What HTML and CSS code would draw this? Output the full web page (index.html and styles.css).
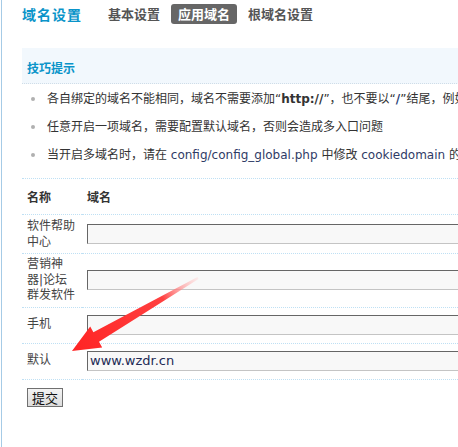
FILE: index.html
```html
<!DOCTYPE html>
<html>
<head>
<meta charset="utf-8">
<link rel="stylesheet" href="styles.css">
</head>
<body>
<div class="frame">
  <div class="topbar">
    <h3 class="title">域名设置</h3>
    <ul class="tabs">
      <li class="tab">基本设置</li>
      <li class="tab current">应用域名</li>
      <li class="tab">根域名设置</li>
    </ul>
  </div>
  <div class="tips-head">技巧提示</div>
  <ul class="tiplist">
    <li><span class="tiptext">各自绑定的域名不能相同，域名不需要添加“<b>http://</b>”，也不要以“<b class="slash">/</b>”结尾，例如：portal.comsenz.com</span></li>
    <li><span class="tiptext">任意开启一项域名，需要配置默认域名，否则会造成多入口问题</span></li>
    <li><span class="tiptext">当开启多域名时，请在 <span class="latin">config/config_global.php</span> 中修改 <span class="latin">cookiedomain</span> 的值</span></li>
  </ul>
  <table class="form">
    <tr class="head">
      <th class="name">名称</th>
      <th>域名</th>
    </tr>
    <tr>
      <td class="name two">软件帮助中心</td>
      <td><input class="txt" type="text" value=""></td>
    </tr>
    <tr>
      <td class="name">营销神器|论坛群发软件</td>
      <td><input class="txt" type="text" value=""></td>
    </tr>
    <tr>
      <td class="name">手机</td>
      <td><input class="txt" type="text" value=""></td>
    </tr>
    <tr>
      <td class="name">默认</td>
      <td><input class="txt" type="text" value="www.wzdr.cn"></td>
    </tr>
  </table>
  <div class="submit"><button class="btn" type="button">提交</button></div>
</div>
<svg class="arrow" width="458" height="447" viewBox="0 0 458 447">
  <defs>
    <linearGradient id="ag" gradientUnits="userSpaceOnUse" x1="198" y1="278" x2="72" y2="351">
      <stop offset="0" stop-color="#ffd6d6" stop-opacity="0.4"/>
      <stop offset="0.28" stop-color="#ff4040"/>
      <stop offset="1" stop-color="#ff2424"/>
    </linearGradient>
  </defs>
  <polygon points="197.5,277.1 198.5,278.9 99,341.8 102.2,347.4 72,351 90.2,326.6 93.4,332.2" fill="url(#ag)"/>
</svg>
</body>
</html>
```
FILE: styles.css
```css
html, body {
  margin: 0;
  padding: 0;
  background: #fff;
  overflow: hidden;
}
body {
  position: relative;
  font-family: "DejaVu Sans", "Noto Sans CJK SC", sans-serif;
  font-size: 12px;
  color: #333;
}
.frame {
  margin-left: 1px;
  border-left: 1px solid #a6cbe6;
  padding-left: 20px;
  min-height: 100vh;
  width: 700px;
  box-sizing: border-box;
}
.topbar {
  display: flex;
  align-items: center;
  padding-top: 4px;
  height: 20px;
  margin-bottom: 24px;
}
.title {
  margin: 0 19px 0 0;
  font-family: "Noto Sans CJK SC", sans-serif;
  font-size: 14px;
  font-weight: bold;
  letter-spacing: 1px;
  line-height: 20px;
  color: #0a94c9;
}
.tabs {
  display: flex;
  gap: 4px;
  margin: 0;
  padding: 0;
  list-style: none;
}
.tab {
  padding: 0 7px;
  line-height: 20px;
  font-family: "Noto Sans CJK SC", sans-serif;
  font-size: 13px;
  font-weight: bold;
  color: #555;
  border-radius: 3px;
}
.tab.current {
  background: #666;
  color: #fff;
}
.tips-head {
  background: #f2f8fd;
  padding: 12px 5px 7px;
  line-height: 16px;
  font-family: "Noto Sans CJK SC", sans-serif;
  font-weight: bold;
  color: #0a94c9;
  border-bottom: 1px dotted #cfdde8;
}
.tiplist {
  list-style: none;
  margin: 0 0 9px;
  padding: 1px 0 0;
}
.tiplist li {
  display: flex;
  align-items: center;
  padding: 4px 0 4px 9px;
  line-height: 20px;
  white-space: nowrap;
}
.tiplist li::before {
  content: "";
  flex: none;
  width: 4px;
  height: 4px;
  border-radius: 50%;
  background: #b0b0b0;
  margin-right: 12px;
}
.tiplist b {
  color: #333;
}
.tiplist .slash {
  color: #2b3f78;
}
.latin {
  color: #2f3b66;
}
.form {
  border-collapse: collapse;
  width: 600px;
}
.form th {
  text-align: left;
  font-family: "Noto Sans CJK SC", sans-serif;
  font-weight: bold;
  line-height: 16px;
  padding: 10px 5px 9px;
  border-top: 1px dotted #bfe0f4;
  border-bottom: 1px dotted #bfe0f4;
  color: #333;
}
.form td {
  padding: 3px 5px;
  line-height: 15.5px;
  vertical-align: middle;
  border-bottom: 1px dotted #bfe0f4;
  color: #444;
}
.form td.two {
  line-height: 16px;
}
.form .name {
  width: 50px;
}
.txt {
  display: block;
  box-sizing: border-box;
  width: 400px;
  height: 20px;
  margin: 4px 0 5px;
  padding: 0 2px;
  border: 1px solid;
  border-color: #666 #ccc #c4c4c4 #666;
  background: #f8f8f8;
  font-family: "DejaVu Sans", sans-serif;
  font-size: 13px;
  color: #222a55;
  outline: none;
}
.submit {
  padding: 8px 0 0 5px;
}
.btn {
  height: 19px;
  padding: 0 4px;
  margin: 0;
  border: 1px solid #707070;
  border-radius: 0;
  background: linear-gradient(#f4f4f4, #dcdcdc);
  font-family: "Noto Sans CJK SC", sans-serif;
  font-size: 13px;
  line-height: 15px;
  color: #111;
}
.arrow {
  position: absolute;
  left: 0;
  top: 0;
  pointer-events: none;
}
```
